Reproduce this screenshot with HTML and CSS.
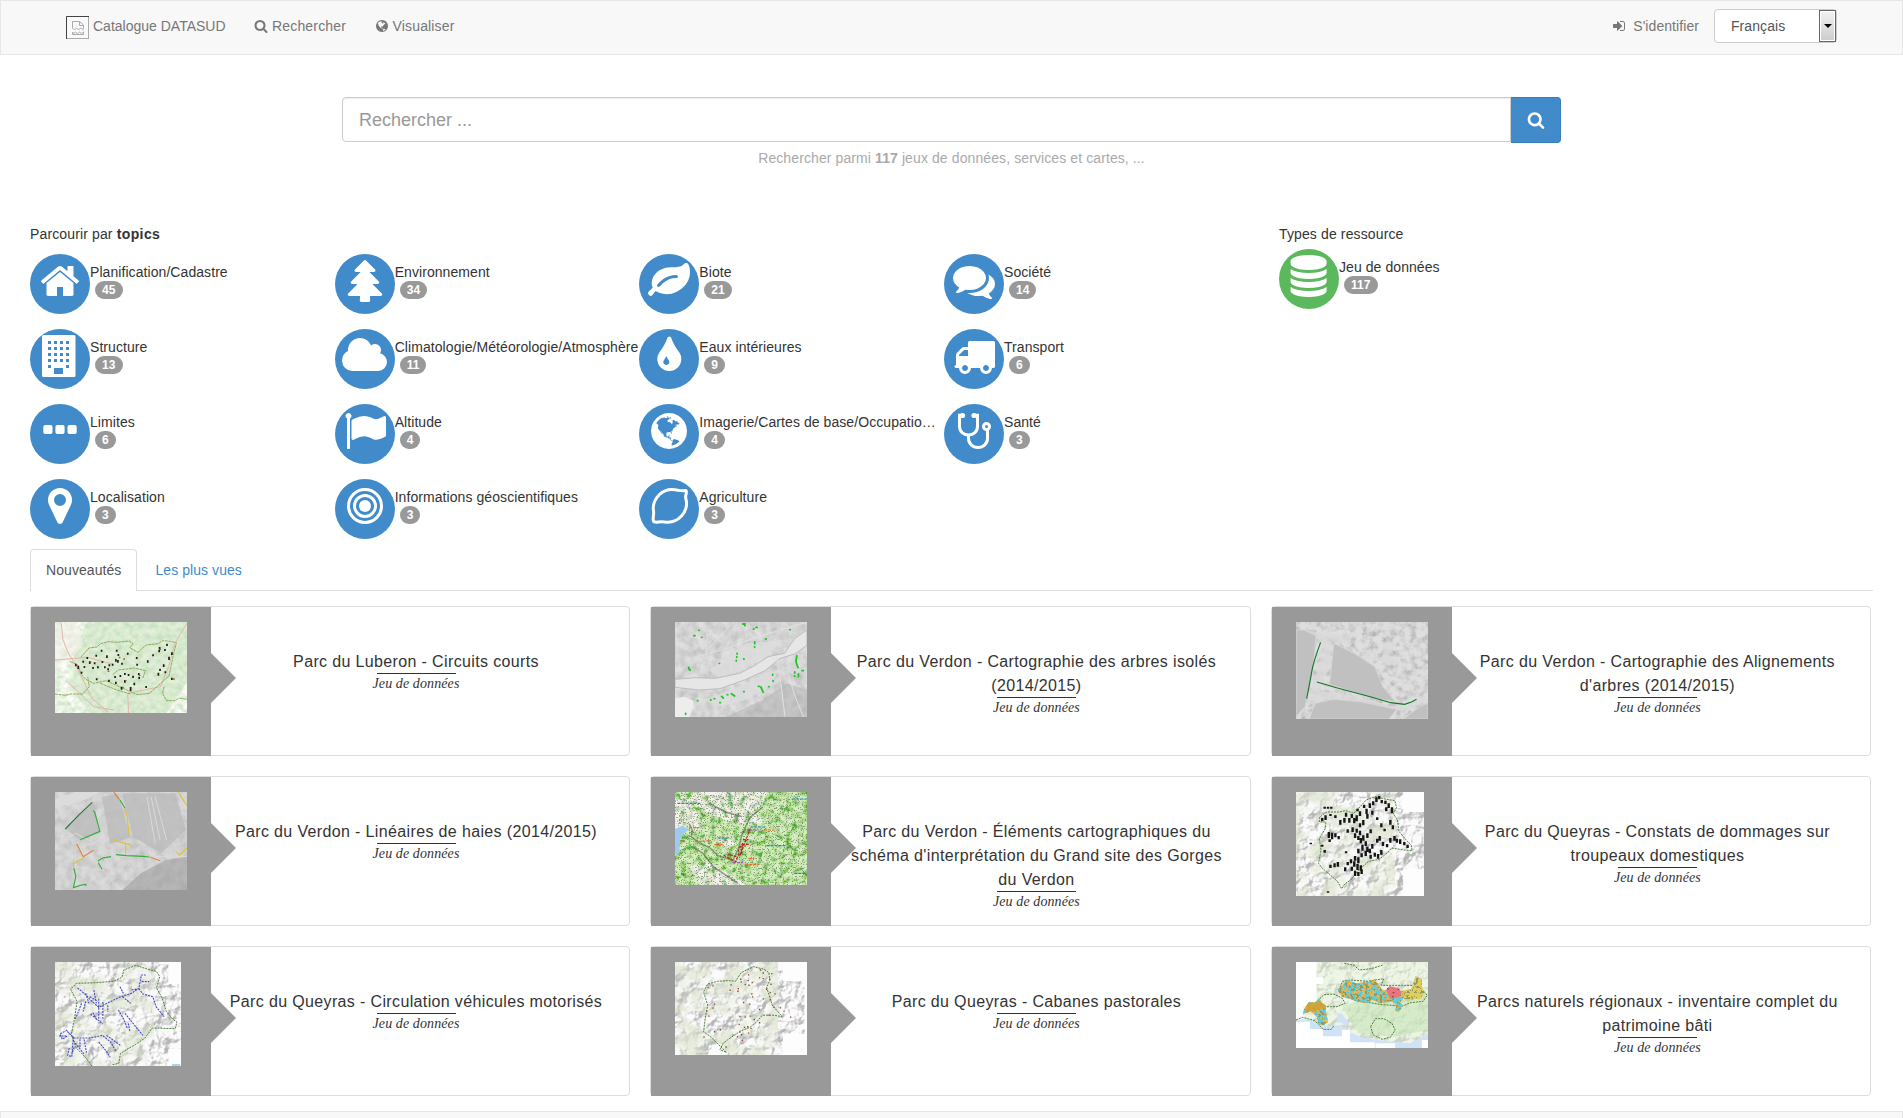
FILE: index.html
```html
<!DOCTYPE html>
<html lang="fr">
<head>
<meta charset="utf-8">
<title>Catalogue DATASUD</title>
<link rel="stylesheet" href="styles.css">
</head>
<body>
<svg class="defs" width="0" height="0" aria-hidden="true">
  <defs>
    <filter id="relief" x="0" y="0" width="1" height="1">
      <feTurbulence type="fractalNoise" baseFrequency=".032 .028" numOctaves="6" seed="8"/>
      <feDiffuseLighting surfaceScale="28" lighting-color="#fff" diffuseConstant="1.25"><feDistantLight azimuth="225" elevation="52"/></feDiffuseLighting>
      <feComponentTransfer><feFuncR type="linear" slope=".5" intercept=".47"/><feFuncG type="linear" slope=".5" intercept=".47"/><feFuncB type="linear" slope=".5" intercept=".47"/></feComponentTransfer>
    </filter>
    <filter id="greens" x="0" y="0" width="1" height="1">
      <feTurbulence type="fractalNoise" baseFrequency=".02" numOctaves="4" seed="3"/>
      <feColorMatrix values="0 0 0 0 .74  0 0 0 0 .79  0 0 0 0 .64  3.5 0 0 0 -1.3"/>
    </filter>
    <filter id="aerial" x="0" y="0" width="1" height="1">
      <feTurbulence type="fractalNoise" baseFrequency=".05 .04" numOctaves="5" seed="14"/>
      <feColorMatrix values="1 0 0 0 .26  1 0 0 0 .26  1 0 0 0 .26  0 0 0 0 1"/>
    </filter>
    <filter id="canopy" x="0" y="0" width="1" height="1">
      <feTurbulence type="fractalNoise" baseFrequency=".06 .05" numOctaves="3" seed="5"/>
      <feColorMatrix values="1.8 0 0 0 -.08  1.8 0 0 0 -.08  1.8 0 0 0 -.08  0 0 0 0 1"/>
    </filter>
    <filter id="streets" x="0" y="0" width="1" height="1">
      <feTurbulence type="fractalNoise" baseFrequency=".06" numOctaves="4" seed="21"/>
      <feColorMatrix values=".8 0 0 0 .43  .4 .2 0 0 .6  .7 0 .1 0 .39  0 0 0 0 1"/>
    </filter>
    <filter id="topo" x="0" y="0" width="1" height="1">
      <feTurbulence type="fractalNoise" baseFrequency=".07 .06" numOctaves="5" seed="12"/>
      <feColorMatrix values="3 0 0 0 -.82  2 .4 0 0 -.38  2.600 0 .4 0 -.96  0 0 0 0 1"/>
    </filter>
    <filter id="specks" x="0" y="0" width="1" height="1">
      <feTurbulence type="fractalNoise" baseFrequency=".3 .26" numOctaves="2" seed="2"/>
      <feColorMatrix values="0 0 0 0 .12  0 0 0 0 .17  0 0 0 0 .1  9 0 0 0 -5.200"/>
    </filter>
    <filter id="bluespots" x="0" y="0" width="1" height="1">
      <feTurbulence type="fractalNoise" baseFrequency=".12 .1" numOctaves="2" seed="6"/>
      <feColorMatrix values="0 0 0 0 .1  0 0 0 0 .62  0 0 0 0 .75  25 0 0 0 -12"/>
    </filter>
    <filter id="darkspots" x="0" y="0" width="1" height="1">
      <feTurbulence type="fractalNoise" baseFrequency=".14 .12" numOctaves="2" seed="16"/>
      <feColorMatrix values="0 0 0 0 .3  0 0 0 0 .32  0 0 0 0 .12  25 0 0 0 -14"/>
    </filter>
    <symbol id="globe" viewBox="0 0 1792 1792"><path d="M896 128q209 0 385.5 103t279.5 279.5 103 385.5-103 385.5-279.5 279.5-385.5 103-385.5-103-279.5-279.5-103-385.5 103-385.5 279.5-279.5 385.5-103zm274 521q-2 1-9.5 9.5t-13.5 9.5q2 0 4.5-5t5-11 3.5-7q6-7 22-15 14-6 52-12 34-8 51 11-2-2 9.5-13t14.5-12q3-2 15-4.5t15-7.5l2-22q-12 1-17.5-7t-6.5-21q0 2-6 8 0-7-4.5-8t-11.5 1-9 1q-10-3-15-7.5t-8-16.5-4-15q-2-5-9.5-11t-9.5-10q-1-2-2.5-5.5t-3-6.5-4-5.5-5.5-2.5-7 5-7.5 10-4.5 5q-3-2-6-1.5t-4.5 1-4.5 3-5 3.5q-3 2-8.5 3t-8.5 2q15-5-1-11-10-4-16-3 9-4 7.5-12t-8.5-14h5q-1-4-8.5-8.5t-17.5-8.5-13-6q-8-5-34-9.5t-33-.5q-5 6-4.5 10.5t4 14 3.5 12.5q1 6-5.5 13t-6.5 12q0 7 14 15.5t10 21.5q-3 8-16 16t-16 12q-5 8-1.5 18.5t10.5 16.5q2 2 1.5 4t-3.5 4.5-5.5 4-6.5 3.5l-3 2q-11 5-20.5-6t-13.5-26q-7-25-16-30-23-8-29 1-5-13-41-26-25-9-58-4 6-1 0-15-7-15-19-12 3-6 4-17.5t1-13.5q3-13 12-23 1-1 7-8.5t9.5-13.5.5-6q35 4 50-11 5-5 11.5-17t10.5-17q9-6 14-5.5t14.5 5.5 14.5 5q14 1 15.5-11t-7.5-20q12 1 3-17-4-7-8-9-12-4-27 5-8 4 2 8-1-1-9.5 10.5t-16.5 17.5-16-5q-1-1-5.5-13.5t-9.5-13.5q-8 0-16 15 3-8-11-15t-24-8q19-12-8-27-7-4-20.5-5t-19.5 4q-5 7-5.5 11.5t5 8 10.5 5.5 11.5 4 8.5 3q14 10 8 14-2 1-8.5 3.5t-11.5 4.5-6 4q-3 4 0 14t-2 14q-5-5-9-17.5t-7-16.5q7 9-25 6l-10-1q-4 0-16 2t-20.5 1-13.5-8q-4-8 0-20 1-4 4-2-4-3-11-9.5t-10-8.5q-46 15-94 41 6 1 12-1 5-2 13-6.5t10-5.5q34-14 42-7l5-5q14 16 20 25-7-4-30-1-20 6-22 12 7 12 5 18-4-3-11.5-10t-14.5-11-15-5q-16 0-22 1-146 80-235 222 7 7 12 8 4 1 5 9t2.5 11 11.5-3q9 8 3 19 1-1 44 27 19 17 21 21 3 11-10 18-1-2-9-9t-9-4q-3 5 .5 18.5t10.5 12.5q-7 0-9.5 16t-2.5 35.5-1 23.5l2 1q-3 12 5.5 34.5t21.5 19.5q-13 3 20 43 6 8 8 9 3 2 12 7.5t15 10 10 10.5q4 5 10 22.5t14 23.5q-2 6 9.5 20t10.5 23q-1 0-2.5 1t-2.5 1q3 7 15.5 14t15.5 13q1 3 2 10t3 11 8 2q2-20-24-62-15-25-17-29-3-5-5.5-15.5t-4.5-14.5q2 0 6 1.5t8.5 3.5 7.5 4 2 3q-3 7 2 17.5t12 18.5 17 19 12 13q6 6 14 19.5t0 13.5q9 0 20 10.5t17 19.5q5 8 8 26t5 24q2 7 8.5 13.5t12.5 9.5l16 8 13 7q5 2 18.5 10.5t21.5 11.5q10 4 16 4t14.5-2.5 13.5-3.5q15-2 29 15t21 21q36 19 55 11-2 1 .5 7.5t8 15.5 9 14.5 5.5 8.5q5 6 18 15t18 15q6-4 7-9-3 8 7 20t18 10q14-3 14-32-31 15-49-18 0-1-2.5-5.5t-4-8.5-2.5-8.5 0-7.5 5-3q9 0 10-3.5t-2-12.5-4-13q-1-8-11-20t-12-15q-5 9-16 8t-16-9q0 1-1.5 5.5t-1.5 6.5q-13 0-15-1 1-3 2.5-17.5t3.5-22.5q1-4 5.5-12t7.5-14.5 4-12.5-4.5-9.5-17.5-2.5q-19 1-26 20-1 3-3 10.5t-5 11.5-9 7q-7 3-24 2t-24-5q-13-8-22.5-29t-9.5-37q0-10 2.5-26.5t3-25-5.5-24.5q3-2 9-9.5t10-10.5q2-1 4.5-1.5t4.5 0 4-1.5 3-6q-1-1-4-3-3-3-4-3 7 3 28.5-1.5t27.5 1.5q15 11 22-2 0-1-2.5-9.5t-.5-13.5q5 27 29 9 3 3 15.5 5t17.5 5q3 2 7 5.5t5.5 4.5 5-.5 8.5-6.5q10 14 12 24 11 40 19 44 7 3 11 2t4.5-9.5 0-14-1.5-12.5l-1-8v-18l-1-8q-15-3-18.5-12t1.5-18.5 15-18.5q1-1 8-3.5t15.5-6.5 12.5-8q21-19 15-35 7 0 11-9-1 0-5-3t-7.5-5-4.5-2q9-5 2-16 5-3 7.5-11t7.5-10q9 12 21 2 7-8 1-16 5-7 20.5-10.5t18.5-9.5q7 2 8-2t1-12 3-12q4-5 15-9t13-5l17-11q3-4 0-4 18 2 31-11 10-11-6-20 3-6-3-9.5t-15-5.5q3-1 11.5-.5t10.5-1.5q15-10-7-16-17-5-43 12zm-163 877q206-36 351-189-3-3-12.5-4.5t-12.5-3.5q-18-7-24-8 1-7-2.5-13t-8-9-12.5-8-11-7q-2-2-7-6t-7-5.5-7.5-4.5-8.5-2-10 1l-3 1q-3 1-5.5 2.5t-5.5 3-4 3 0 2.5q-21-17-36-22-5-1-11-5.5t-10.5-7-10-1.5-11.5 7q-5 5-6 15t-2 13q-7-5 0-17.5t2-18.5q-3-6-10.5-4.5t-12 4.5-11.5 8.5-9 6.5-8.5 5.5-8.5 7.5q-3 4-6 12t-5 11q-2-4-11.5-6.5t-9.5-5.5q2 10 4 35t5 38q7 31-12 48-27 25-29 40-4 22 12 26 0 7-8 20.5t-7 21.5q0 6 2 16z"/></symbol>
    <symbol id="search" viewBox="0 0 1792 1792"><path d="M1216 832q0-185-131.5-316.5t-316.5-131.5-316.5 131.5-131.5 316.5 131.5 316.5 316.5 131.5 316.5-131.5 131.5-316.5zm512 832q0 52-38 90t-90 38q-54 0-90-38l-343-342q-179 124-399 124-143 0-273.5-55.5t-225-150-150-225-55.5-273.5 55.5-273.5 150-225 225-150 273.5-55.5 273.5 55.5 225 150 150 225 55.5 273.5q0 220-124 399l343 343q37 37 37 90z"/></symbol>
  </defs>
</svg>

<header class="navbar">
  <nav class="nav-left">
    <a class="brand"><svg class="broken" viewBox="0 0 23 23"><rect x=".5" y=".5" width="22" height="22" fill="#fafafa" stroke="#aaa"/><path d="M.5 23V.5H23" fill="none" stroke="#444"/><path d="M6.500 12V5.500h7l4 3.500v4M13.500 5.500v4h4M6.500 12l2 2 2-2 2 2 2-2 3 2M6.500 16v2.500h11V16l-2 1.500-2-1.500-2 1.500-2-1.500-1.500 1.500z" fill="none" stroke="#aaa"/></svg>Catalogue DATASUD</a>
    <a class="nav-item"><svg class="fa"><use href="#search"/></svg>Rechercher</a>
    <a class="nav-item"><svg class="fa"><use href="#globe"/></svg>Visualiser</a>
  </nav>
  <div class="nav-right">
    <a class="signin"><svg class="fa" viewBox="0 0 1792 1792"><path d="M1312 896q0 26-19 45l-544 544q-19 19-45 19t-45-19-19-45v-288h-448q-26 0-45-19t-19-45v-384q0-26 19-45t45-19h448v-288q0-26 19-45t45-19 45 19l544 544q19 19 19 45zm352-352v704q0 119-84.5 203.5t-203.5 84.5h-320q-13 0-22.500-9.500t-9.500-22.500q0-4-1-20t-.5-26.500 3-23.500 10-19.500 20.500-6.500h320q66 0 113-47t47-113v-704q0-66-47-113t-113-47h-312l-11.500-1-11.500-3-8-5.500-7-9-2-13.500q0-4-1-20t-.5-26.500 3-23.500 10-19.500 20.500-6.500h320q119 0 203.500 84.500t84.500 203.500z"/></svg>S'identifier</a>
    <div class="select"><span>Français</span><i class="drop"></i></div>
  </div>
</header>

<main>
  <section class="search">
    <div class="search-group">
      <div class="search-input">Rechercher ...</div>
      <button class="search-btn"><svg><use href="#search"/></svg></button>
    </div>
    <p class="help">Rechercher parmi <b>117</b> jeux de données, services et cartes, ...</p>
  </section>

  <section class="facets">
    <div class="topics">
      <p class="facet-title">Parcourir par <b>topics</b></p>
      <div class="topic-grid">
        <a class="topic"><svg class="disc" viewBox="0 0 60 60"><path transform="translate(9 6) scale(.02344)" d="M1472 992v480q0 26-19 45t-45 19h-384v-384h-256v384h-384q-26 0-45-19t-19-45v-480q0-1 .5-3t.5-3l575-474 575 474q1 2 1 6zm223-69l-62 74q-8 9-21 11h-3q-13 0-21-7l-692-577-692 577q-12 8-24 7-13-2-21-11l-62-74q-8-10-7-23.500t11-21.500l719-599q32-26 76-26t76 26l244 204v-195q0-14 9-23t23-9h192q14 0 23 9t9 23v408l219 182q10 8 11 21.500t-7 23.500z"/></svg><span class="label">Planification/Cadastre<b class="badge">45</b></span></a>
        <a class="topic"><svg class="disc" viewBox="0 0 60 60"><path transform="translate(12 6) scale(.02344)" d="M1504 1472q0 26-19 45t-45 19h-462q1 17 6 87.500t5 108.500q0 25-18 42.500t-43 17.500h-320q-25 0-43-17.500t-18-42.500q0-38 5-108.500t6-87.500h-462q-26 0-45-19t-19-45 19-45l402-403h-229q-26 0-45-19t-19-45 19-45l402-403h-197q-26 0-45-19t-19-45 19-45l384-384q19-19 45-19t45 19l384 384q19 19 19 45t-19 45-45 19h-197l402 403q19 19 19 45t-19 45-45 19h-229l402 403q19 19 19 45z"/></svg><span class="label">Environnement<b class="badge">34</b></span></a>
        <a class="topic"><svg class="disc" viewBox="0 0 60 60"><path transform="translate(9 6) scale(.02344)" d="M1280 704q0-26-19-45t-45-19q-172 0-318 49.500t-259.500 134-235.500 219.500q-19 21-19 45 0 26 19 45t45 19q24 0 45-19 27-24 74-71t67-66q137-124 268.500-176t313.500-52q26 0 45-19t19-45zm512-198q0 95-20 193-46 224-184.500 383t-357.500 268q-214 108-438 108-148 0-286-47-15-5-88-42t-96-37q-16 0-39.500 32t-45 70-52.500 70-60 32q-43 0-63.500-17.500t-45.500-59.500q-2-4-6-11t-5.500-10-3-9.500-1.500-13.500q0-35 31-73.500t68-65.500 68-56 31-48q0-4-14-38t-16-44q-9-51-9-104 0-115 43.500-220t119-184.500 170.500-139 204-95.500q55-18 145-25.500t179.500-9 178.500-6 163.500-24 113.500-56.500l29.500-29.500 29.500-28 27-20 36.500-16 43.500-4.500q39 0 70.500 46t47.500 112 24 124 8 96z"/></svg><span class="label">Biote<b class="badge">21</b></span></a>
        <a class="topic"><svg class="disc" viewBox="0 0 60 60"><path transform="translate(9 6) scale(.02344)" d="M1408 768q0 139-94 257t-256.500 186.500-353.500 68.500q-86 0-176-16-124 88-278 128-36 9-86 16h-3q-11 0-20.500-8t-11.500-21q-1-3-1-6.500t.5-6.500 2-6l2.500-5t3.500-5.500 4-5 4.500-5 4-4.500q5-6 23-25t26-29.500 22.500-29 25-38.500 20.500-44q-124-72-195-177t-71-224q0-139 94-257t256.500-186.500 353.500-68.500 353.500 68.500 256.500 186.500 94 257zm384 256q0 120-71 224.500t-195 176.500q10 24 20.500 44t25 38.500 22.500 29 26 29.500 23 25q1 1 4 4.500t4.500 5 4 5 3.500 5.500l2.500 5t2 6 .5 6.500-1 6.500q-3 14-13 22t-22 7q-50-7-86-16-154-40-278-128-90 16-176 16-271 0-472-132 58 4 88 4 161 0 309-45t264-129q125-92 192-212t67-254q0-77-23-152 129 71 204 178t75 230z"/></svg><span class="label">Société<b class="badge">14</b></span></a>
        <a class="topic"><svg class="disc" viewBox="0 0 60 60"><path fill-rule="evenodd" d="M13.500 6h30.500q1.500 0 1.500 1.500V46.500q0 1.500-1.500 1.500H13.500q-1.500 0-1.500-1.500V7.500q0-1.500 1.500-1.500zM18 12v3h3v-3zM24 12v3h3v-3zM30 12v3h3v-3zM36 12v3h3v-3zM18 18v3h3v-3zM24 18v3h3v-3zM30 18v3h3v-3zM36 18v3h3v-3zM18 24v3h3v-3zM24 24v3h3v-3zM30 24v3h3v-3zM36 24v3h3v-3zM18 30v3h3v-3zM24 30v3h3v-3zM30 30v3h3v-3zM36 30v3h3v-3zM18 36v3h3v-3zM36 36v3h3v-3zM24 39v6h9v-6z"/></svg><span class="label">Structure<b class="badge">13</b></span></a>
        <a class="topic"><svg class="disc" viewBox="0 0 60 60"><path transform="translate(5.500 6) scale(.02344)" d="M1984 1152q0 159-112.500 271.500t-271.500 112.500h-1088q-185 0-316.500-131.500t-131.500-316.500q0-132 71-241.500t187-163.500q-2-28-2-43 0-212 150-362t362-150q158 0 286.500 88t187.500 230q70-62 166-62 106 0 181 75t75 181q0 75-41 138 129 30 213 134.500t84 239.500z"/></svg><span class="label">Climatologie/Météorologie/Atmosphère<b class="badge">11</b></span></a>
        <a class="topic"><svg class="disc" viewBox="0 0 60 60"><path transform="translate(9.300 6) scale(.02344)" d="M896 1152q0-36-20-69-1-1-15.500-22.500t-25.500-38-25-44-21-50.500q-4-16-21-16t-21 16q-7 23-21 50.500t-25 44-25.500 38-15.500 22.500q-20 33-20 69 0 53 37.500 90.500t90.500 37.500 90.500-37.500 37.500-90.500zm512-128q0 212-150 362t-362 150-362-150-150-362q0-145 81-275 6-9 62.500-90.500t101-151 99.500-178 83-201.500q9-30 34-47t51-17 51.500 17 33.500 47q28 93 83 201.500t99.500 178 101 151 62.500 90.500q81 127 81 275z"/></svg><span class="label">Eaux intérieures<b class="badge">9</b></span></a>
        <a class="topic"><svg class="disc" viewBox="0 0 60 60"><path transform="translate(9 6) scale(.02344)" d="M640 1408q0-52-38-90t-90-38-90 38-38 90 38 90 90 38 90-38 38-90zm-384-512h384v-256h-158q-13 0-22 9l-195 195q-9 9-9 22v30zm1280 512q0-52-38-90t-90-38-90 38-38 90 38 90 90 38 90-38 38-90zm256-1088v1024q0 15-4 26.500t-13.500 18.500-16.500 11.500-23.500 6-22.500 2-25.500 0-22.500-.5q0 106-75 181t-181 75-181-75-75-181h-384q0 106-75 181t-181 75-181-75-75-181h-64q-3 0-22.500.5t-25.500 0-22.500-2-23.500-6-16.500-11.500-13.500-18.500-4-26.500q0-26 19-45t45-19v-320q0-8-.5-35t0-38 2.500-34.500 6.500-37 14-30.500 22.500-30l198-198q19-19 50.500-32t58.500-13h160v-192q0-26 19-45t45-19h1024q26 0 45 19t19 45z"/></svg><span class="label">Transport<b class="badge">6</b></span></a>
        <a class="topic"><svg class="disc" viewBox="0 0 60 60"><rect x="13.300" y="21" width="9.200" height="9" rx="2"/><rect x="25.400" y="21" width="9.200" height="9" rx="2"/><rect x="37.500" y="21" width="9.200" height="9" rx="2"/></svg><span class="label">Limites<b class="badge">6</b></span></a>
        <a class="topic"><svg class="disc" viewBox="0 0 60 60"><path transform="translate(9 6) scale(.02344)" d="M320 256q0 72-64 110v1266q0 13-9.500 22.500t-22.500 9.500h-64q-13 0-22.500-9.500t-9.500-22.500v-1266q-64-38-64-110 0-53 37.500-90.500t90.500-37.500 90.500 37.500 37.500 90.500zm1472 64v763q0 25-12.500 38.500t-39.500 27.500q-215 116-369 116-61 0-123.500-22t-108.500-48-115.500-48-142.500-22q-192 0-464 146-17 9-33 9-26 0-45-19t-19-45v-742q0-32 31-55 21-14 79-43 236-120 421-120 107 0 200 29t219 88q38 19 88 19 54 0 117.500-21t110-47 88-47 54.500-21q26 0 45 19t19 45z"/></svg><span class="label">Altitude<b class="badge">4</b></span></a>
        <a class="topic"><svg class="disc" viewBox="0 0 60 60"><use href="#globe" x="9" y="6" width="42" height="42"/></svg><span class="label">Imagerie/Cartes de base/Occupatio…<b class="badge">4</b></span></a>
        <a class="topic"><svg class="disc" viewBox="0 0 60 60"><g fill="none" stroke="#fff" stroke-width="3"><path d="M18 11.300h-2.500v11c0 5.500 4 8.700 9 8.700s9-3.200 9-8.700v-11H30"/><path d="M24.500 31v3.500c0 5 4 9 9.500 9s9.500-4 9.500-9V26"/><circle cx="42.500" cy="22.500" r="3"/></g><circle cx="18.500" cy="11.500" r="2.600"/><circle cx="30" cy="11.500" r="2.600"/></svg><span class="label">Santé<b class="badge">3</b></span></a>
        <a class="topic"><svg class="disc" viewBox="0 0 60 60"><path transform="translate(9 6) scale(.02344)" d="M1152 640q0-106-75-181t-181-75-181 75-75 181 75 181 181 75 181-75 75-181zm256 0q0 109-33 179l-364 774q-16 33-47.500 52t-67.500 19-67.500-19-46.500-52l-365-774q-33-70-33-179 0-212 150-362t362-150 362 150 150 362z"/></svg><span class="label">Localisation<b class="badge">3</b></span></a>
        <a class="topic"><svg class="disc" viewBox="0 0 60 60"><circle cx="30" cy="27" r="6"/><g fill="none" stroke="#fff" stroke-width="3"><circle cx="30" cy="27" r="10.500"/><circle cx="30" cy="27" r="16.500"/></g></svg><span class="label">Informations géoscientifiques<b class="badge">3</b></span></a>
        <a class="topic"><svg class="disc" viewBox="0 0 60 60"><path fill="none" stroke="#fff" stroke-width="3" stroke-linejoin="round" d="M46.500 11.500c-3 .8-5 .2-7.500-.3-7-1.700-13.500-.7-18.500 4.300S13.500 26 14.500 32c.6 4-.8 6.500-.2 9.500.6 2.300 2.700 1.800 5.200 1.400 3.500-.6 6 .3 9.500.3 5.500 0 10-2.500 13.500-6.200 4.500-5 6-11.500 4.300-17.500-.7-2.500.7-4.500.6-6.500 0-1-.3-1.500-.9-1.500z"/></svg><span class="label">Agriculture<b class="badge">3</b></span></a>
      </div>
    </div>
    <div class="types">
      <p class="facet-title">Types de ressource</p>
      <a class="topic"><svg class="disc green" viewBox="0 0 60 60"><path transform="translate(8.600 6) scale(.02344)" d="M896 768q237 0 443-43t325-127v170q0 69-103 128t-280 93.500-385 34.500-385-34.500-280-93.500-103-128v-170q119 84 325 127t443 43zm0 768q237 0 443-43t325-127v170q0 69-103 128t-280 93.500-385 34.500-385-34.500-280-93.500-103-128v-170q119 84 325 127t443 43zm0-384q237 0 443-43t325-127v170q0 69-103 128t-280 93.500-385 34.500-385-34.500-280-93.500-103-128v-170q119 84 325 127t443 43zm0-1152q208 0 385 34.500t280 93.500 103 128v128q0 69-103 128t-280 93.500-385 34.500-385-34.500-280-93.500-103-128v-128q0-69 103-128t280-93.500 385-34.500z"/></svg><span class="label">Jeu de données<b class="badge">117</b></span></a>
    </div>
  </section>

  <ul class="tabs"><li class="active">Nouveautés</li><li>Les plus vues</li></ul>

  <section class="cards">
    <article class="card"><div class="thumb"><svg class="map" width="132" height="91" viewBox="135 246 323 273" preserveAspectRatio="none">
      <rect x="135" y="246" width="323" height="273" fill="#dfeacf" filter="url(#streets)"/>
      <path d="M215 246h243v180l-50 93H220l-40-60V340z" fill="#c2ddb4" opacity=".45"/>
      <path d="M135 250h50l20 60-30 50-40 10z" fill="#f2eee6" opacity=".6"/>
      <path d="M150 246l4 50 12 40 20 40 20 50 20 50 40 40M170 430l60 70 50 10M458 250l-30 60-15 70-20 60-80 20 2 59M135 360l80-8 60 20" fill="none" stroke="#e3b5ae"/>
      <path d="M198 352l20-28 20-3 8-10 20-6 20 2 30-4 10 8-8 12 20 14 20-22 30-4 10-9 20 2 14 4-8 40-10 60-28 30-20 22-30 4-40-22-36-20-30 8-20-12-10-14-10-30-20-10M246 430l40 20 34 12M402 440l-4 20 10 22 20 0 10-8 20 4M135 462l26 4 12-4 30 0 16-22-4-30M276 404l14-14 40-6 26 8-6 22" fill="none" stroke="#8eac5b" stroke-dasharray="3 .6"/>
      <path class="pins" stroke="#241a12" d="M249 329v6M286 329v6M290 342v6M313 338v6M236 344v6M262 346v8M214 351v6M284 357v8M289 360v8M335 351v6M375 343v6M391 321v8M409 311v7M404 327v6M390 330v7M421 337v8M414 350v10M204 362v6M186 371v8M192 377v10M220 364v8M232 367v6M251 363v6M276 371v6M268 373v6M299 368v6M336 371v6M362 361v7M401 373v8M392 386v7M388 398v9M405 394v6M228 381v6M240 379v6M257 379v6M265 385v6M207 378v6M200 395v6M237 415v6M267 419v7M282 408v6M284 425v7M295 405v6M306 399v6M315 402v6M326 407v7M340 399v6M341 410v7M306 420v8M329 428v8M320 441v12M298 440v9M358 438v6M421 413v7"/>
      <path d="M293 350v5M304 355v4M222 364v4M342 404v4M308 420v4M301 440v4M392 326v4M266 392v4M426 415v4" class="pins" stroke="#a65a23"/>
    </svg></div><div class="info"><h4>Parc du Luberon - Circuits courts</h4><hr><em>Jeu de données</em></div></article>

    <article class="card"><div class="thumb"><svg class="map" width="132" height="95" viewBox="86 96 323 285" preserveAspectRatio="none">
      <rect x="86" y="96" width="323" height="285" filter="url(#aerial)"/>
      <path d="M86 96h323v285H86z" fill="#ccc" opacity=".6"/>
      <path d="M300 330l60-50 49 20v81H210z" fill="#aaa" opacity=".45"/>
      <path d="M170 240l90-80 90-10-40 50-80 50-40 10zM160 330l80-40 70-40 30-10-20 50-60 40-70 20z" fill="#ddd" opacity=".8"/>
      <path d="M409 120l-30 25-25 45-40 10-35 28-35 22-60 15-50-2-48 5 0 24 60 8 50-4 60-26 50-28 36-36 38-15 29-25z" fill="#e6e6e6" stroke="#bdbdbd"/>
      <path d="M86 325l25-5 20 12 0 20-10 29H86z" fill="#ededed"/>
      <path d="M150 115q20 10 14 40l-2 50M110 210l90-30 90-40 119-44M230 96l-70 90M335 200l10 80 10 100M360 240l20 80 20 60" fill="none" stroke="#e0e0e0"/>
      <path class="trees" d="M252 102h5v5M284 112h3M278 117h1M144 121h1M132 137h3M151 142h1M367 119h1M308 147h1M281 156v5M281 170v2M238 190v2M237 200v2M236 211v2M254 207h1M194 220h1M120 232v5M123 239v2M325 253v2M326 272v2M290 289h2M296 291l6 16M315 290h1M254 305h1M214 314h1M224 311l8 7M200 319l4 5M182 326h1M173 330h1M196 338h1M141 332h1M112 370v3M384 197l-2 18 5 18M397 242h3M379 246v3M388 252v8M378 258h1"/>
    </svg></div><div class="info"><h4>Parc du Verdon - Cartographie des arbres isolés (2014/2015)</h4><hr><em>Jeu de données</em></div></article>

    <article class="card"><div class="thumb"><svg class="map" width="132" height="97" viewBox="88 96 322 291" preserveAspectRatio="none">
      <rect x="88" y="96" width="322" height="291" filter="url(#canopy)"/>
      <path d="M88 96h322v291H88z" fill="#cdcdcd" opacity=".66"/>
      <path d="M88 120l50 0-8 120-20 110-22 30zM180 160l50 30 50 40 20 60 30 45-60-12-100-40zM135 340l50-14 90 10 60 20-20 31H120zM390 350l20-10v47h-60z" fill="#c0c0c0" stroke="#d4d4d4"/>
      <path d="M105 120l60 10 50 5 10 30-50-10-4 70-20 60-5 20 34 0 90 25 50 18 40-5 45-25v15l-60 30-100-26-90-10-50 28-20 40H95l20-60 20-80 20-80-15-35zM260 200l60 0 20 15-10 15-30-15-40-5zM300 160l24-5 0 35-20 10z" fill="#dadada" opacity=".75"/>
      <path d="M148 157q-18 60-22 90t-12 79M139 276l50 18 80 26 50 18 34 5 18-8 11-7" fill="none" stroke="#12762a" stroke-width="1.100"/>
    </svg></div><div class="info"><h4>Parc du Verdon - Cartographie des Alignements d'arbres (2014/2015)</h4><hr><em>Jeu de données</em></div></article>

    <article class="card"><div class="thumb"><svg class="map" width="132" height="98" viewBox="135 96 323 294" preserveAspectRatio="none">
      <rect x="135" y="96" width="323" height="294" filter="url(#aerial)"/>
      <path d="M135 96h323v294H135z" fill="#c8c8c8" opacity=".66"/>
      <path d="M160 205l70-80 15 90-50 25zM250 110l40-8 30 130-50 20zM300 100h130l25 110-60 70-70-50z" fill="#bbb" opacity=".8"/>
      <path d="M135 140q60-5 110-44h-60l-50 20z" fill="#dcdcdc"/>
      <path d="M135 170q30-40 60-50l50-24M235 150l20 110-10 60 30 40-30 30M360 110l20 140M370 110l22 130M380 110l28 130M135 260l50-40 110 70 163 0M185 270l60-30 20 40-20 50-60-10z" fill="none" stroke="#dadada"/>
      <path d="M345 340l60-40 53-10v100H300z" fill="#999" opacity=".55"/>
      <g fill="none" stroke-width="1.150"><path stroke="#33ad3c" d="M228 152l4 4 13 58-48 25M294 120l12 24M240 303l12-9 20-4M284 284l26 3 40 2 16 2M241 308l9 20M181 325l5 24-6 34 20-8 10-2v5"/><path stroke="#247a34" d="M160 207l35-44 31-36"/><path stroke="#dd843d" d="M279 97l14 22M188 252l16 38 25-19M368 291l25 12"/><path stroke="#d9c33e" d="M306 144l6 30 4 50M278 241l42 13M308 251v32M205 294l-25 17 1 13M437 97l21 40M458 264l-18 21-10-11"/></g>
    </svg></div><div class="info"><h4>Parc du Verdon - Linéaires de haies (2014/2015)</h4><hr><em>Jeu de données</em></div></article>

    <article class="card"><div class="thumb"><svg class="map" width="132" height="93" viewBox="86 606 323 279" preserveAspectRatio="none">
      <rect x="86" y="606" width="323" height="279" fill="#a9dc88"/>
      <path d="M130 606h180l-10 40-40 30 20 30-50-10-60-20-50-50zM120 830l50-10 60 40 30 25H150zM86 620h30l20 40 20 60-70 0zM250 670l40 0 10 30-30 0zM190 750h50l-20 30z" fill="#ebe3e5"/>
      <rect x="86" y="606" width="323" height="279" filter="url(#topo)" opacity=".5"/>
      <rect x="86" y="606" width="323" height="279" filter="url(#specks)" opacity=".65"/>
      <path d="M86 716l18-8 16 10-20 20-4 50-10 8z" fill="#9fcaf0"/>
      <path d="M120 700l8 20-2 20 20 20 24 12 20 24 14 6 24 10 14-40 6-30 10-30 12-30 30-30M130 770l24 20 26 40 60 50M170 640l40 26 40 14" fill="none" stroke="#47543c" stroke-width="1.500" opacity=".55"/>
      <g class="marks" fill="none"><path stroke="#b02a1f" d="M270 715l-12 40-12 40 6-36-10 20 0 18m10-48l14 0m-16 14h16M205 795l10 8 20 12 4-14-24-8"/><path stroke="#ef6b2a" d="M120 713h26m-42 42h10m20-1h22l16-3m10 13h22m62 42h14m-22 18h32m14-104h26"/><path stroke="#2f7fb5" d="M270 711h40M92 640h56m225-13h36M190 744h30m90 23h48m20 83h30"/><path stroke="#b54adf" d="M268 720h24m-64 98h24"/></g>
    </svg></div><div class="info"><h4>Parc du Verdon - Éléments cartographiques du schéma d'interprétation du Grand site des Gorges du Verdon</h4><hr><em>Jeu de données</em></div></article>

    <article class="card"><div class="thumb"><svg class="map" width="128" height="104" viewBox="88 606 312 312" preserveAspectRatio="none">
      <rect x="88" y="606" width="312" height="312" filter="url(#relief)"/>
      <rect x="88" y="606" width="240" height="312" filter="url(#greens)" opacity=".75"/>
      <path d="M349 606h51v60h-51zM349 836h51v82h-51z" fill="#fdfdfd"/>
      <path d="M145 696l0-14 18-16 30 0 16-4 20 8 20-26 10-14 22-10 28 8 20 4 4 20-8 20 10 16 4 36 16 24 14 18 2 16-20-2-30-6-10 14-20 20-26 6-24 26-20 30-14 12-8 14-10-22-20-22-16-16-10-16 6-40-4-34 14-30 2-20z" class="park"/>
      <path class="spots" d="M284 622v14M291 618v10M297 630v10M306 632v10M314 640v14M322 652v18M308 652v12M276 634v12M268 640v14M260 656v16M254 644v10M244 664v14M238 656v8M236 676v18M230 684v16M224 672v12M218 684v14M210 668v12M206 684v14M196 690v14M184 676v8M172 672v6M160 676v14M152 684v10M262 672v14M274 662v12M286 682v8M296 700v12M318 690v14M324 706v12M304 716v8M252 690v16M244 700v12M168 726v18M176 728v20M184 730v12M192 738v10M170 748v8M214 718v10M226 712v14M236 716v12M232 730v14M244 722v14M252 736v16M262 730v14M270 718v12M246 744v16M258 754v14M250 764v18M262 770v16M268 776v14M274 762v14M240 738v12M286 746v12M292 738v14M300 756v12M310 762v10M318 744v14M328 738v14M334 746v12M342 748v14M352 756v10M360 764v10M296 780v14M288 792v14M280 788v12M270 794v12M258 782v16M248 790v12M240 776v14M232 798v14M240 802v18M230 814v16M238 822v18M246 826v16M224 830v12M232 842v16M240 846v12M248 838v14M222 808v12M214 816v10M208 832v12M190 816v14M182 820v12M172 824v10M158 780v8M152 764v6M210 784v6M124 758v5M158 650v6M166 650v6M174 650v6M166 904v4"/>
    </svg></div><div class="info"><h4>Parc du Queyras - Constats de dommages sur troupeaux domestiques</h4><hr><em>Jeu de données</em></div></article>

    <article class="card"><div class="thumb"><svg class="map" width="126" height="104" viewBox="135 606 308 312" preserveAspectRatio="none">
      <rect x="135" y="606" width="308" height="312" filter="url(#relief)"/>
      <rect x="135" y="606" width="240" height="312" filter="url(#greens)" opacity=".65"/>
      <path d="M412 606h31v66h-31zM412 866h31v52h-31z" fill="#fdfdfd"/>
      <path d="M225 918l-14-24-24-30-12-40 8-50 6-50-16-36 14-18 50-2 40-4 22-12 4-22 30-14 24 10 26 8 8 16-8 34 14 30 10 40 16 24 10 8-4 20-56-2-18 30-24 20-36 26-4 30-16 4" class="park"/>
      <path class="tracks" d="M190 684l20 20 12 16 20 22 20-12 30-18 30-12 16-14M220 710l20 14M210 700l8 30m-8-6l-6 30M230 690l6 40m6-14l0 60m10-50v50m12-40v20M200 730l-16 50M294 680l8 20m20-10l18-4 6-40m-6 40l10 16 24 8 8 30 20 30M300 710l20 20M345 645h12m-10 20h18M290 750l14 30 8 26m-6-46l26 40 18 26M314 790l4 24M222 762l30 30m-24-34l10 24M165 810l-18 12 6 16 12-10-20 0m20-14l16 20 20 0 20 0 30-8 20 20 14 30m-24-50l36 32M180 830l-4 60-10-4 4-24m10-20l26 40m-24-20l-6 20m20-44v30m10-30l6 40m30-32l20 30 8 16"/>
      <path d="M137 904h20" stroke="#fff" stroke-width="1.500"/><path d="M421 915h20" stroke="#8cc9dc" stroke-width="1.500"/>
    </svg></div><div class="info"><h4>Parc du Queyras - Circulation véhicules motorisés</h4><hr><em>Jeu de données</em></div></article>

    <article class="card"><div class="thumb"><svg class="map" width="132" height="93" viewBox="86 96 323 280" preserveAspectRatio="none">
      <rect x="86" y="96" width="323" height="280" filter="url(#relief)"/>
      <rect x="86" y="96" width="250" height="280" filter="url(#greens)" opacity=".75"/>
      <path d="M350 96h59v57h-59zM350 312h59v64h-59zM403 150h6v170h-6z" fill="#fdfdfd"/>
      <path d="M212 368l-20-24-20-24-16-14 4-40 6-40-10-40 10-24 24-8 30-2 14 2 14-26 30-18 26 8 12 10 2 24-8 20 8 30 6 24 24 34-24-4-24 0-14 20-16 16-24 12-24 20-18 16-8 20z" class="park"/>
      <path class="huts" d="M295 118v4M302 127v4M323 129v4M266 133v4M293 142v4M302 144v4M318 146v4M321 161v4M247 146v4M248 154v4M265 150v4M275 156v4M258 162v4M267 164v4M223 163v4M221 179v4M241 174v4M240 182v4M167 171v4M179 166v4M274 190v4M276 199v4M310 176v4M319 186v4M331 190v4M302 205v4M319 208v4M254 216v4M269 221v4M293 237v4M328 230v4M344 232v4M353 242v4M369 260v4M183 221v4M179 233v4M164 241v4M169 257v4M245 258v4M258 260v4M270 257v4M280 267v4M316 254v4M293 277v4M243 282v4M256 291v4M264 289v4M272 294v4M245 305v4M228 314v4M239 319v4M249 313v4M266 308v4M197 298v4M183 304v4M157 320v4M251 330v4M211 350v4"/>
    </svg></div><div class="info"><h4>Parc du Queyras - Cabanes pastorales</h4><hr><em>Jeu de données</em></div></article>

    <article class="card"><div class="thumb"><svg class="map" width="132" height="86" viewBox="88 96 322 258" preserveAspectRatio="none">
      <rect x="88" y="96" width="322" height="258" filter="url(#relief)"/>
      <path d="M88 96h322v258H88z" fill="#dff0d0" opacity=".5"/>
      <path d="M200 230l60-30 80 0 70-10v110l-80 20-90-10z" fill="#c6e5b5" opacity=".6"/>
      <path d="M88 270l40 0 40 20 30-4 20 20 30 16 50 10 70 8 42-28v42H88z" fill="#cfe2f8"/>
      <path d="M188 248l14 6 14 22-6 14-10-12-12-6z" fill="#cfe2f8"/>
      <path d="M88 96h50v46h16v20h-16v66h-32v40H88zM88 275h34v22h32v22h46v-20h20v38h60v17H88zM395 330h15v24h-15zM282 340h48v14h-48z" fill="#fff"/>
      <path d="M206 100l24 6 12 14 30-4 30-12M146 206l10-12 24-2 20 12 8 16-20 10-30 0-12-8zM88 270l16-8 30 10 20 26 20 0 6-10M270 290l12-24 20 0 20 14 8 20-12 22-20 6-22-14zM192 180l10-26 20-4 40 4 40-8-6 20 50 0 30 0 4-24 14 10 0 24 14 20-10 18-30 4-20 10-50-4-70-14z" class="park"/>
      <clipPath id="zone-b"><path d="M190 182l10-14 14-18 20 10 30-4 16-8 10 18 10 16 20-6 20 10 10-4 20-6 6-22 4-16 14 10 0 20 8 20-12 20-10-2-20 6-10-8-8 12 6 12-8 16-10 0 4-20-14-10-26 6-20-10-10 10-24-4-20-10-20-6zM104 256l4-20 12-20 14 2 10-14 8 16 8 6 2 26 4 24-10 10-14 0-2-24-8-10-8-8-14 6z"/></clipPath>
      <g clip-path="url(#zone-b)"><path d="M88 96h322v258H88z" fill="#e2a72b" opacity=".78"/><path d="M352 140h58v90h-58z" fill="#dfcf5a"/><rect x="88" y="96" width="260" height="258" filter="url(#bluespots)"/><rect x="88" y="96" width="322" height="258" filter="url(#darkspots)"/><path d="M112 224l16-10 30 0 2 18-24 12-24 8z" fill="#dc9f24" opacity=".8"/></g>
      <path d="M308 180l8-12 20 6 10 12-8 16-20 4z" fill="#e87580"/><path d="M310 176h4m10 12h4m8-10h4m-18 22h4" class="huts"/>
    </svg></div><div class="info"><h4>Parcs naturels régionaux - inventaire complet du patrimoine bâti</h4><hr><em>Jeu de données</em></div></article>
  </section>
</main>
<footer class="footer"></footer>
</body>
</html>
```

FILE: styles.css
```css
* { box-sizing: border-box; }
html, body { height: 100%; overflow: hidden; }
body {
  margin: 0;
  background: #fff;
  color: #333;
  font: 14px/20px "Liberation Sans", Arial, sans-serif;
  letter-spacing: .07px;
}
p, h4, ul { margin: 0; padding: 0; }
.defs { position: absolute; }

.navbar {
  display: flex;
  justify-content: space-between;
  height: 55px;
  padding: 0 65px;
  background: #f8f8f8;
  border: 1px solid #e7e7e7;
  color: #777;
}
.nav-left { display: flex; align-items: flex-start; padding-top: 15px; }
.brand { display: flex; gap: 4px; letter-spacing: 0; }
.broken { width: 23px; height: 23px; }
.nav-item { display: flex; gap: 4px; margin-left: 28.500px; letter-spacing: .16px; }
.fa { width: 14px; height: 14px; margin-top: 3px; fill: currentColor; }
.nav-right { display: flex; align-items: flex-start; gap: 15px; padding-top: 8px; }
.signin { display: flex; gap: 7px; padding-top: 7px; }
.select {
  display: flex;
  justify-content: space-between;
  width: 123px;
  height: 34px;
  padding: 6px 0 0 16px;
  background: #fff;
  border: 1px solid #ccc;
  border-radius: 4px;
  color: #555;
}
.drop {
  display: grid;
  place-items: center;
  width: 17px;
  height: 32px;
  margin-top: -6px;
  border: 1px solid #666;
  background: linear-gradient(#f2f2f2, #ccc);
  box-shadow: inset 0 0 0 1px #fff;
}
.drop::after { content: ""; border: 4px solid transparent; border-top-color: #000; border-bottom: 0; }

main { padding: 0 30px; }
.search { padding-top: 42px; }
.search-group { display: flex; width: 1219px; height: 46px; margin: 0 auto; }
.search-input {
  flex: 1;
  height: 45px;
  padding: 10px 16px;
  border: 1px solid #ccc;
  border-radius: 4px 0 0 4px;
  box-shadow: inset 0 1px 1px rgba(0, 0, 0, .075);
  color: #999;
  font-size: 18px;
  line-height: 24px;
  letter-spacing: 0;
}
.search-btn {
  display: grid;
  place-items: center;
  width: 50px;
  height: 46px;
  padding: 0;
  background: #428bca;
  border: 1px solid #357ebd;
  border-left: 0;
  border-radius: 0 4px 4px 0;
}
.search-btn svg { width: 18px; height: 18px; fill: #fff; }
.help { margin-top: 5px; color: #aaa; letter-spacing: .1px; text-align: center; }

.facets { display: grid; grid-template-columns: 1219px 1fr; column-gap: 30px; margin-top: 56px; }
.facet-title { letter-spacing: .13px; }
.facet-title b { letter-spacing: .4px; }
.topic-grid { display: grid; grid-template-columns: repeat(4, 304.660px); row-gap: 15px; margin-top: 10px; }
.topic { display: flex; height: 60px; white-space: nowrap; }
.types .topic { margin-top: 5px; }
.disc { flex: none; width: 60px; height: 60px; border-radius: 50%; background: #428bca; fill: #fff; }
.green { background: #5cb85c; }
.label { display: flex; flex-direction: column; align-items: flex-start; padding-top: 9px; line-height: 18px; }
.badge {
  margin-left: 5px;
  padding: 3px 7px;
  background: #999;
  border-radius: 10px;
  color: #fff;
  font-size: 12px;
  line-height: 12px;
}

.tabs { display: flex; gap: 2px; height: 42px; margin-top: 10px; border-bottom: 1px solid #ddd; list-style: none; }
.tabs li { height: 42px; padding: 11px 16px; color: #428bca; }
.tabs .active { padding: 10px 15px; background: #fff; border: 1px solid #ddd; border-bottom: 0; border-radius: 4px 4px 0 0; color: #555; }

.cards { display: grid; grid-template-columns: 600.450px 600.950px 600px; column-gap: 20px; row-gap: 20px; margin-top: 15px; }
.card { display: flex; height: 150px; border: 1px solid #ddd; border-radius: 4px; }
.thumb { position: relative; flex: none; width: 180px; height: 149px; padding: 15px 0 0 24px; background: #999; }
.thumb::after {
  content: "";
  position: absolute;
  top: 46px;
  left: 100%;
  border: 25px solid transparent;
  border-left-color: #999;
  border-right: 0;
}
.map { display: block; overflow: hidden; }
.map path, .map circle { vector-effect: non-scaling-stroke; }
.pins, .huts, .spots, .tracks, .trees { fill: none; }
.pins { stroke-width: 1.700; }
.trees { stroke: #23c62a; stroke-width: 1.800; stroke-linecap: round; }
.marks { stroke-width: 1.200; }
.marks path { stroke-dasharray: 3 1; }
.park { fill: none; stroke: #50803a; stroke-width: 1; stroke-dasharray: 2 1; }
.spots { stroke: #151515; stroke-width: 2.400; }
.tracks { stroke: #4249c4; stroke-width: 1.100; stroke-dasharray: 2 1; }
.huts { stroke: #8a4428; stroke-width: 1.300; }
.info { position: relative; width: 380px; margin-left: 15px; padding-top: 43px; text-align: center; }
.info h4 { font-size: 16px; font-weight: 400; line-height: 24px; letter-spacing: .36px; }
.info hr { width: 79px; height: 1px; margin: -1px auto 0; border: 0; background: #333; }
.info em { display: block; font: italic 14px/19px "Liberation Serif", serif; letter-spacing: .1px; }

.footer { height: 60px; margin-top: 15px; background: #f8f8f8; border: 1px solid #e7e7e7; }
```
